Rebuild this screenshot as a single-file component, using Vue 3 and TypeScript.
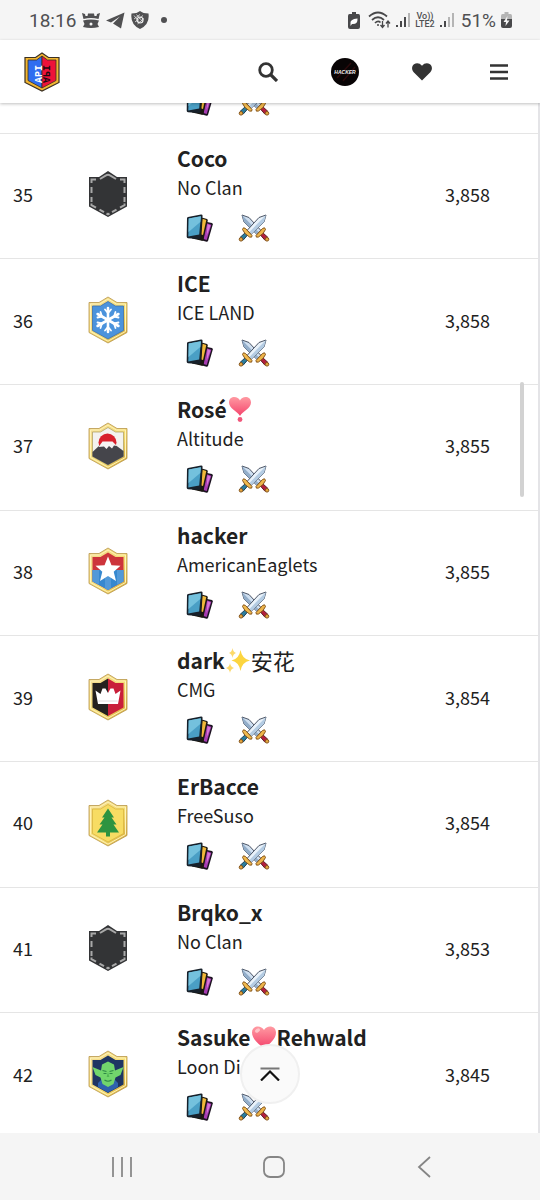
<script setup lang="ts">
type Emblem = 'none' | 'snow' | 'fuji' | 'star' | 'crown' | 'tree' | 'goblin'
type Emoji = 'heart' | 'heart-dot' | 'sparkles'

interface NamePart {
  text?: string
  han?: boolean
  emoji?: Emoji
}

interface Player {
  rank: number
  name: NamePart[]
  clan: string
  emblem: Emblem
  trophies: string
}

const players: Player[] = [
  { rank: 34, name: [{ text: '' }], clan: '', emblem: 'none', trophies: '' },
  { rank: 35, name: [{ text: 'Coco' }], clan: 'No Clan', emblem: 'none', trophies: '3,858' },
  { rank: 36, name: [{ text: 'ICE' }], clan: 'ICE LAND', emblem: 'snow', trophies: '3,858' },
  { rank: 37, name: [{ text: 'Rosé' }, { emoji: 'heart-dot' }], clan: 'Altitude', emblem: 'fuji', trophies: '3,855' },
  { rank: 38, name: [{ text: 'hacker' }], clan: 'AmericanEaglets', emblem: 'star', trophies: '3,855' },
  { rank: 39, name: [{ text: 'dark' }, { emoji: 'sparkles' }, { text: '安花', han: true }], clan: 'CMG', emblem: 'crown', trophies: '3,854' },
  { rank: 40, name: [{ text: 'ErBacce' }], clan: 'FreeSuso', emblem: 'tree', trophies: '3,854' },
  { rank: 41, name: [{ text: 'Brqko_x' }], clan: 'No Clan', emblem: 'none', trophies: '3,853' },
  { rank: 42, name: [{ text: 'Sasuke' }, { emoji: 'heart' }, { text: 'Rehwald' }], clan: 'Loon Die', emblem: 'goblin', trophies: '3,845' },
]
</script>

<template>
  <div class="screen">
    <svg class="sprite" aria-hidden="true">
      <defs>
        <linearGradient id="pink" x1="0" y1="0" x2="0" y2="1">
          <stop offset="0" stop-color="#ff9aa2" />
          <stop offset="1" stop-color="#f4436c" />
        </linearGradient>
        <linearGradient id="gold" x1="0" y1="0" x2="1" y2="1">
          <stop offset="0" stop-color="#f3dc98" />
          <stop offset="0.6" stop-color="#f5dc70" />
          <stop offset="1" stop-color="#cf9f2c" />
        </linearGradient>
        <symbol id="frame" viewBox="0 0 40 48">
          <path d="M20 1 11 6.500H1V36.500L20 47 39 36.500V6.500H29Z" fill="url(#gold)" stroke="#b8954a" stroke-width="0.800" />
          <path d="M20 3 11.500 8H2.500V35.500L20 45.200 37.500 35.500V8H28.500Z" fill="none" stroke="#fff3b8" stroke-width="1" />
        </symbol>
        <symbol id="snow" viewBox="0 0 40 48">
          <path d="M20 5.500 12.500 10H4.500V34.500L20 43 35.500 34.500V10H27.500Z" fill="#4b93dc" stroke="#3a6fae" stroke-width="0.800" />
          <g stroke="#fff" stroke-width="2.600" stroke-linecap="round" fill="none">
            <path d="M20 12V36M9.600 18 30.400 30M30.400 18 9.600 30" />
            <path d="M17 13.500 20 17 23 13.500M17 34.500 20 31 23 34.500M9.500 21.500 14 20.500 12.500 16M30.500 21.500 26 20.500 27.500 16M9.500 26.500 14 27.500 12.500 32M30.500 26.500 26 27.500 27.500 32" stroke-width="1.800" />
          </g>
        </symbol>
        <symbol id="fuji" viewBox="0 0 40 48">
          <path d="M20 5.500 12.500 10H4.500V34.500L20 43 35.500 34.500V10H27.500Z" fill="#f3f2ef" stroke="#b4a468" stroke-width="0.800" />
          <circle cx="19.500" cy="20.500" r="9" fill="#d8202c" />
          <path d="M4.500 30 13 22H26L35.500 29V34.500L20 43 4.500 34.500Z" fill="#45454b" />
          <path d="M14.500 19.500H24.500L29 24 26 23.500 24 26.500 21 24 18.500 27 16 24.500 10.500 25Z" fill="#f5f3f3" />
        </symbol>
        <symbol id="star" viewBox="0 0 40 48">
          <path d="M20 5.500 12.500 10H4.500V34.500L20 43 35.500 34.500V10H27.500Z" fill="#cd343b" />
          <path d="M4.500 23H35.500V34.500L20 43 4.500 34.500Z" fill="#3688cf" />
          <path d="M4.500 23H11V37.800L4.500 34.500ZM17 28H23V41.500L20 43 17 41.500ZM29 23H35.500V34.500L29 37.800Z" fill="#5299d8" />
          <path d="M20 9.500 23.500 18.200 32.500 18.800 25.700 24.700 28 34 20 29 12 34 14.300 24.700 7.500 18.800 16.500 18.200Z" fill="#fff" />
        </symbol>
        <symbol id="crown" viewBox="0 0 40 48">
          <path d="M20 5.500 12.500 10H4.500V34.500L20 43Z" fill="#24211f" />
          <path d="M20 5.500 27.500 10H35.500V34.500L20 43Z" fill="#c91f3a" />
          <path d="M7.500 17.500 12.500 21 14.500 15.500H17.500L20 20 22.500 15.500H25.500L27.500 21 32.500 17.500 30 31H10Z" fill="#fff" />
          <path d="M10.500 28H29.500" stroke="#d9d3d3" stroke-width="0.800" />
        </symbol>
        <symbol id="tree" viewBox="0 0 40 48">
          <path d="M20 5.500 12.500 10H4.500V34.500L20 43 35.500 34.500V10H27.500Z" fill="#f7dc63" stroke="#d9b53d" stroke-width="0.800" />
          <path d="M20 9.500 26 18.500H23.500L28.500 25.500H25.500L31 33.500H22V37.500H18V33.500H9L14.500 25.500H11.500L16.500 18.500H14Z" fill="#2d9440" />
        </symbol>
        <symbol id="goblin" viewBox="0 0 40 48">
          <path d="M20 5.500 12.500 10H4.500V34.500L20 43 35.500 34.500V10H27.500Z" fill="#1e3563" />
          <path d="M10 33 14 29H26L30 33V37L20 42.500 10 37Z" fill="#2f62ae" />
          <path d="M4.500 17 13 20.500 14 14.500 20 11.500 26 14.500 27 20.500 35.500 17 32.500 25 27.500 27.500 25.500 34 20 37 14.500 34 12.500 27.500 7.500 25Z" fill="#72d66c" />
          <path d="M14.500 20.500 18.500 21.500M25.500 20.500 21.500 21.500M15.500 23.500H18.500M21.500 23.500H24.500M16.500 30Q20 32.500 23.500 30" stroke="#2f8a47" stroke-width="1.200" fill="none" />
          <path d="M20 22 18.700 27H21.300Z" fill="#4fb553" />
        </symbol>
        <symbol id="none" viewBox="0 0 40 48">
          <path d="M20 1 11 7H1V36.500L20 47 39 36.500V7H29Z" fill="#333436" />
          <path d="M12 9 18 5.300Q20 4 22 5.300L28 9M3.500 13V9.500H8M3.500 17V23M3.500 27V32M3.500 33.500V35.200L8 37.700M11.500 39.700 16 42.200M18.500 43.500 20 44.300 21.500 43.500M24 42.200 28.500 39.700M32 37.700 36.500 35.200V33.500M36.500 32V27M36.500 23V17M36.500 13V9.500H32" fill="none" stroke="#a8a8a8" stroke-width="2" />
        </symbol>
        <symbol id="cards" viewBox="0 0 28 28">
          <path d="M16 7 26 9Q27 9.500 26.800 10.500L22 27Q21.500 28 20.500 27.800L11 25Z" fill="#1b1220" />
          <path d="M20 9 25.300 10.700 20.700 26 17.500 25Z" fill="#a63bb0" />
          <path d="M21.500 10.200 24.500 11.500 20.500 22Z" fill="#d878d8" />
          <path d="M14 3 21 5Q22 5.500 21.800 6.500L17.500 25.500Q17 27 16 26.700L6 24.500Z" fill="#1b1710" />
          <path d="M16.500 4.800 20.300 6 17 21 15.500 20.500Z" fill="#f0b83a" />
          <path d="M2 3 15 .600Q16.500 .500 16.600 1.800L14.500 23.500Q14.300 25 13 25L2 24.200Q.700 24 .700 22.700L1 4.200Q1 3.200 2 3Z" fill="#17202a" />
          <path d="M2.700 4.600 14.900 2.300 13.200 20.500 2.300 22.500Z" fill="#4a9fc5" />
          <path d="M2.700 4.600 14.900 2.300 14.300 8 2.500 18Z" fill="#74c1dd" />
        </symbol>
        <symbol id="swords" viewBox="0 0 32 28">
          <g stroke-linejoin="round" stroke="#4c5566" stroke-width="1">
            <path d="M4 1 11 3.500 23 16.500 18.500 20 6 8Z" fill="#cfdff0" />
            <path d="M4 1 20.500 18 18.500 20 6 8Z" fill="#93aeca" stroke="none" />
            <path d="M22 20.500 24.500 18.500 30 23.500 27 26.300Z" fill="#b51f3c" stroke="#5d1c24" />
            <path d="M18 21.500 24.500 14.500Q27 12.500 27.500 15.500L25 19.500 20.500 23Q17.500 24 18 21.500Z" fill="#edb44a" stroke="#85551d" />
            <circle cx="29" cy="25.300" r="1.800" fill="#e6a63d" stroke="#85551d" />
            <path d="M28 1 21 3.500 9 16.500 13.500 20 26 8Z" fill="#e9f2fa" />
            <path d="M28 1 11.500 18 13.500 20 26 8Z" fill="#b4cce3" stroke="none" />
            <path d="M10 20.500 7.500 18.500 2 23.500 5 26.300Z" fill="#2b7d9d" stroke="#173f56" />
            <path d="M14 21.500 7.500 14.500Q5 12.500 4.500 15.500L7 19.500 11.500 23Q14.500 24 14 21.500Z" fill="#f0ba4e" stroke="#85551d" />
            <circle cx="3" cy="25.300" r="1.800" fill="#e6a63d" stroke="#85551d" />
          </g>
        </symbol>
        <symbol id="heart" viewBox="0 0 26 26">
          <path d="M13 24C7 20 1 14.500 1 8.500 1 1.500 10 .500 13 6 16 .500 25 1.500 25 8.500 25 14.500 19 20 13 24Z" fill="url(#pink)" />
          <ellipse cx="6.500" cy="6.500" rx="2.800" ry="1.800" fill="#ffc3c7" transform="rotate(-35 6.500 6.500)" />
        </symbol>
        <symbol id="heart-dot" viewBox="0 0 26 26">
          <path d="M13 20C10.500 15.500 2 12.500 2 6.500 2 -.500 11 -.500 13 4.500 15 -.500 24 -.500 24 6.500 24 12.500 15.500 15.500 13 20Z" fill="url(#pink)" />
          <circle cx="13" cy="23.500" r="2.400" fill="#f0567a" />
        </symbol>
        <symbol id="sparkles" viewBox="0 0 26 26">
          <path d="M15.500 3Q17 12 25 13.500 17 15 15.500 24 14 15 6.500 13.500 14 12 15.500 3Z" fill="#fcd53f" />
          <path d="M7.500 1Q8 5 11 6 8 7 7.500 11 7 7 4 6 7 5 7.500 1ZM5 16Q5.500 20 9 21 5.500 22 5 26 4.500 22 1 21 4.500 20 5 16Z" fill="#fcd96a" />
        </symbol>
      </defs>
    </svg>

    <div class="status">
      <div class="status-group">
        <span class="clock">18:16</span>
        <svg width="18" height="17" viewBox="0 0 18 17" fill="#505052">
          <path d="M0 1 3 2 3.500 4H5.500L6 1.500H12L12.500 4H14.500L15 2 18 1 16.500 7Q9 5 1.500 7Z" />
          <path fill-rule="evenodd" d="M1 8.500Q9 6.500 17 8.500L15.500 12 17 15Q9 17 1 15L2.500 12ZM9 10.500A1.500 1.500 0 1 0 9 13.500 1.500 1.500 0 1 0 9 10.500Z" />
        </svg>
        <svg width="19" height="17" viewBox="0 0 19 17" fill="#505052"><path d="M18.500 .500 0 8.500 5 10.500 14 4.500 7 11.500 15 16.500Z" /></svg>
        <svg width="18" height="18" viewBox="0 0 18 18">
          <path d="M9 0Q12 2.500 17.500 2.500 19 13.500 9 18-1 13.500 .500 2.500 6 2.500 9 0Z" fill="#505052" />
          <path d="M3 4.500 9 12M5.500 3.500 12 11M3 8 9 3.500M4 11 12 4.500M6.500 13 13 7.500" stroke="#e4e4e4" stroke-width="0.800" />
          <circle cx="9" cy="9" r="3" fill="none" stroke="#eee" stroke-width="1.200" />
        </svg>
        <i class="dot"></i>
      </div>
      <div class="status-group right">
        <svg width="12" height="17" viewBox="0 0 12 17">
          <path d="M4 0H8V2H10.500Q12 2 12 4V15Q12 17 10 17H2Q0 17 0 15V4Q0 2 1.500 2H4Z" fill="#48484a" />
          <path d="M2.500 12Q1.500 7 9.500 6.500 10 12.500 4 12L2.500 14Z" fill="#fff" />
        </svg>
        <svg class="wifi" width="23" height="18" viewBox="0 0 23 18" fill="none" stroke="#48484a" stroke-width="1.700">
          <path d="M1 5.500Q10 -2.500 19 5.500M4 9Q10 3.500 16 9M7 12Q10 9 12.500 11.500" />
          <circle cx="10" cy="14" r="1" fill="#48484a" stroke="none" />
          <path d="M14.500 10V16M12.500 14 14.500 16.500 16.500 14M20 16.500V10.500M18 12.500 20 10 22 12.500" stroke-width="1.300" />
        </svg>
        <svg width="14" height="14" viewBox="0 0 14 14" fill="#48484a"><path d="M0 12H2V14H0ZM4 8H6V14H4ZM8 4H10V14H8Z" /><path d="M12 0H14V14H12Z" fill="#b5b5b5" /></svg>
        <span class="carrier"><span>Vo))</span><span>LTE2</span></span>
        <svg width="14" height="14" viewBox="0 0 14 14" fill="#48484a"><path d="M0 12H2V14H0ZM4 8H6V14H4Z" /><path d="M8 4H10V14H8ZM12 0H14V14H12Z" fill="#b5b5b5" /></svg>
        <span class="percent">51%</span>
        <svg width="11" height="16" viewBox="0 0 11 16">
          <path d="M3.500 0H7.500V2H9.500Q11 2 11 4V7H0V4Q0 2 1.500 2H3.500Z" fill="#b5b5b5" />
          <path d="M0 7H11V14Q11 16 9 16H2Q0 16 0 14Z" fill="#48484a" />
          <path d="M6.500 4 2.500 10H5L4.500 14 8.500 8.500H6Z" fill="#f5f5f5" />
        </svg>
      </div>
    </div>

    <header class="topbar">
      <a class="logo" href="#" aria-label="API home">
        <svg width="36" height="40" viewBox="0 0 36 40">
          <path d="M18 1 11.500 5.500H1V30.500L18 39 35 30.500V5.500H24.500Z" fill="#f2b631" stroke="#3b3022" stroke-width="1.200" />
          <path d="M18 4 12.500 8H4V28.500L18 36Z" fill="#2f6df0" stroke="#3b3022" stroke-width="0.800" />
          <path d="M18 4 23.500 8H32V28.500L18 36Z" fill="#ee1239" stroke="#3b3022" stroke-width="0.800" />
          <text class="logo-text" transform="translate(17.500 31) rotate(-90)" fill="#fff">API</text>
          <text class="logo-text" transform="translate(18.500 31) scale(-1 1) rotate(-90)" fill="#1d0a10">API</text>
        </svg>
      </a>
      <nav class="actions">
        <button type="button" aria-label="Search">
          <svg width="20" height="20" viewBox="0 0 20 20" fill="none" stroke="#333" stroke-width="2.800"><circle cx="8" cy="8" r="6.300" /><path d="M12.500 12.500 19 19" stroke-width="3.200" /></svg>
        </button>
        <button type="button" aria-label="Profile">
          <svg width="28" height="28" viewBox="0 0 28 28">
            <circle cx="14" cy="14" r="14" fill="#080405" />
            <path d="M6 20 20 5M12 23 24 9" stroke="#2b0a0c" stroke-width="1.500" />
            <text class="avatar-text" x="14" y="16" text-anchor="middle" fill="#eee">HACKER</text>
          </svg>
        </button>
        <button type="button" aria-label="Favourites">
          <svg width="20" height="18" viewBox="0 0 20 18"><path d="M10 17.500 1.700 9.200C-.700 6.500-.300 3 2 1.300 4.500-.500 7.700 0 10 2.700 12.300 0 15.500-.500 18 1.300 20.300 3 20.700 6.500 18.300 9.200Z" fill="#333" /></svg>
        </button>
        <button type="button" aria-label="Menu">
          <svg width="18" height="16" viewBox="0 0 18 16"><path d="M0 1.500H18M0 8H18M0 14.500H18" stroke="#333" stroke-width="2.600" /></svg>
        </button>
      </nav>
    </header>

    <main class="board">
      <table class="players">
        <colgroup>
          <col class="c-rank" />
          <col class="c-badge" />
          <col />
          <col class="c-trophies" />
        </colgroup>
        <tbody>
          <tr v-for="p in players" :key="p.rank">
            <td class="rank">{{ p.rank }}</td>
            <td class="badge">
              <svg width="40" height="48" viewBox="0 0 40 48">
                <use v-if="p.emblem !== 'none'" href="#frame" width="40" height="48" />
                <use :href="'#' + p.emblem" width="40" height="48" />
              </svg>
            </td>
            <td class="player">
              <div class="name">
                <template v-for="(part, i) in p.name" :key="i">
                  <svg v-if="part.emoji" class="emoji" role="img" :aria-label="part.emoji" viewBox="0 0 26 26"><use :href="'#' + part.emoji" /></svg>
                  <span v-else :class="{ han: part.han }">{{ part.text }}</span>
                </template>
              </div>
              <div class="clan">{{ p.clan }}</div>
              <div class="links">
                <a href="#" aria-label="Deck"><svg width="28" height="28"><use href="#cards" /></svg></a>
                <a href="#" aria-label="Battles"><svg width="32" height="28"><use href="#swords" /></svg></a>
              </div>
            </td>
            <td class="trophies">{{ p.trophies }}</td>
          </tr>
        </tbody>
      </table>
      <i class="thumb"></i>
      <button class="to-top" type="button" aria-label="Back to top">
        <svg width="20" height="14" viewBox="0 0 20 14" fill="none"><path d="M.500 1.500H19.500" stroke="#777" stroke-width="2" /><path d="M1 13.500 10 4.500 19 13.500" stroke="#111" stroke-width="2.200" /></svg>
      </button>
    </main>

    <footer class="system">
      <button type="button" aria-label="Recent apps"><svg width="22" height="22" viewBox="0 0 22 22"><path d="M2 1V21M11 1V21M20 1V21" stroke="#8a8a8a" stroke-width="1.800" /></svg></button>
      <button type="button" aria-label="Home"><svg width="22" height="22" viewBox="0 0 22 22"><rect x="1" y="1" width="20" height="20" rx="6" fill="none" stroke="#858585" stroke-width="1.800" /></svg></button>
      <button type="button" aria-label="Back"><svg width="22" height="22" viewBox="0 0 22 22"><path d="M16 1 5 11 16 21" fill="none" stroke="#858585" stroke-width="1.800" /></svg></button>
    </footer>
  </div>
</template>

<style>
body {
  margin: 0;
  background: #fff;
}
</style>

<style scoped>
.screen {
  display: flex;
  flex-direction: column;
  height: 100vh;
  overflow: hidden;
  color: #212121;
  font-family: "Noto Sans CJK SC", "Noto Sans", sans-serif;
  font-size: 18px;
}
.sprite {
  position: absolute;
  width: 0;
  height: 0;
}
svg {
  display: block;
}
button {
  display: flex;
  align-items: center;
  justify-content: center;
  padding: 0;
  border: 0;
  background: none;
}
.status {
  display: flex;
  flex: none;
  align-items: center;
  justify-content: space-between;
  height: 40px;
  padding: 0 28px 0 29px;
  background: #f5f5f5;
  color: #505052;
  font-family: Roboto, sans-serif;
}
.status-group {
  display: flex;
  align-items: center;
  gap: 6px;
}
.clock,
.percent {
  font-size: 19px;
}
.percent {
  margin-left: 2px;
}
.dot {
  width: 6px;
  height: 6px;
  margin-left: 6px;
  border-radius: 50%;
  background: #505052;
}
.status-group.right {
  gap: 5px;
}
.wifi {
  margin-left: 3px;
}
.carrier {
  display: flex;
  flex-direction: column;
  align-items: center;
  font-size: 9px;
  font-weight: 500;
  line-height: 8px;
}
.topbar {
  position: relative;
  z-index: 1;
  display: flex;
  flex: none;
  align-items: center;
  justify-content: space-between;
  height: 63px;
  padding: 0 3px 0 24px;
  background: #fff;
  box-shadow: 0 1px 3px rgba(0, 0, 0, 0.25);
}
.logo svg {
  overflow: visible;
}
.logo-text {
  font: bold 10px "Liberation Mono", monospace;
}
.avatar-text {
  font: italic bold 5px "Liberation Sans", sans-serif;
}
.actions {
  display: grid;
  grid-template-columns: repeat(4, 77px);
}
.board {
  position: relative;
  flex: 1;
  min-height: 0;
  overflow: hidden;
  border-right: 2px solid #e4e4e7;
}
.players {
  width: 100%;
  height: 1131px;
  margin-top: -95px;
  border-collapse: separate;
  border-spacing: 0;
  table-layout: fixed;
}
.c-rank {
  width: 60px;
}
.c-badge {
  width: 96px;
}
.c-trophies {
  width: 120px;
}
td {
  padding: 0;
  border-bottom: 1px solid #e5e5e5;
}
.rank {
  padding: 0 0 4px 13px;
}
.badge {
  padding-bottom: 3px;
}
.badge svg {
  margin: 0 auto;
}
.player {
  padding: 10px 0 14px 21px;
  vertical-align: top;
}
.name {
  display: flex;
  align-items: center;
  height: 28px;
  font-size: 21px;
  font-weight: 600;
  line-height: 28px;
  white-space: nowrap;
}
.han {
  font-size: 22px;
  font-weight: 400;
}
.emoji {
  width: 26px;
  height: 26px;
}
.clan {
  height: 30px;
  line-height: 30px;
}
.links {
  display: flex;
  gap: 24px;
  margin-top: 12px;
  padding-left: 9px;
}
.trophies {
  padding: 0 48px 4px 0;
  text-align: right;
}
.thumb {
  position: absolute;
  top: 279px;
  right: 14px;
  width: 4px;
  height: 115px;
  border-radius: 2px;
  background: #d2d2d2;
}
.to-top {
  position: absolute;
  bottom: 29px;
  left: 50%;
  width: 60px;
  height: 60px;
  margin-left: -29px;
  border: 2px solid #f0f0f0;
  border-radius: 50%;
  background: #fafafa;
}
.system {
  display: flex;
  flex: none;
  align-items: center;
  justify-content: space-between;
  height: 67px;
  padding: 0 104px 0 111px;
  background: #f5f5f5;
}
</style>
